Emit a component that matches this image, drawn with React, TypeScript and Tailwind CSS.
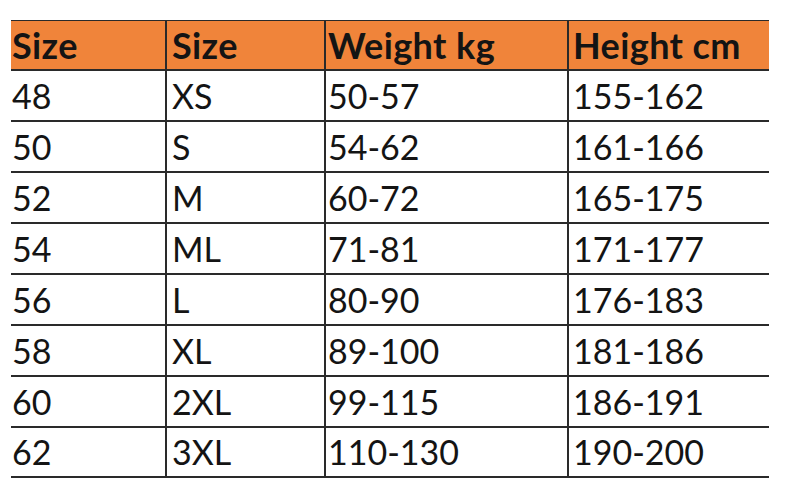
const header = ["Size", "Size", "Weight kg", "Height cm"];

const rows = [
  ["48", "XS", "50-57", "155-162"],
  ["50", "S", "54-62", "161-166"],
  ["52", "M", "60-72", "165-175"],
  ["54", "ML", "71-81", "171-177"],
  ["56", "L", "80-90", "176-183"],
  ["58", "XL", "89-100", "181-186"],
  ["60", "2XL", "99-115", "186-191"],
  ["62", "3XL", "110-130", "190-200"],
];

// left padding per column, tuned to the reference
const pad = ["pl-[1px]", "pl-[5px] border-l-2", "pl-[2px] border-l-2", "pl-[4px] border-l-2"];

const App = () => {
  return (
    <div className="w-[800px] h-[496px] bg-white pt-[20px] pl-[11px] font-['Lato',sans-serif] text-[#141414]">
      <div className="w-[758px] flex flex-col">
        <div className="grid grid-cols-[154px_159px_243px_202px] h-[51px] bg-[#f0843a] border-t border-b-2 border-[#2a2a2a]">
          {header.map((h, i) => (
            <div key={i} className={`${pad[i]} border-[#2a2a2a] flex items-center text-[36px] tracking-[0.4px] font-bold leading-none pb-[1px]`}>
              {h}
            </div>
          ))}
        </div>
        {rows.map((r, ri) => (
          <div key={ri} className="grid grid-cols-[154px_159px_243px_202px] h-[51px] border-b-2 border-[#2a2a2a] last:h-[50px]">
            {r.map((c, ci) => (
              <div key={ci} className={`${pad[ci]} border-[#2a2a2a] flex items-center text-[34px] leading-none`}>
                {c}
              </div>
            ))}
          </div>
        ))}
      </div>
    </div>
  );
};

export default App;
